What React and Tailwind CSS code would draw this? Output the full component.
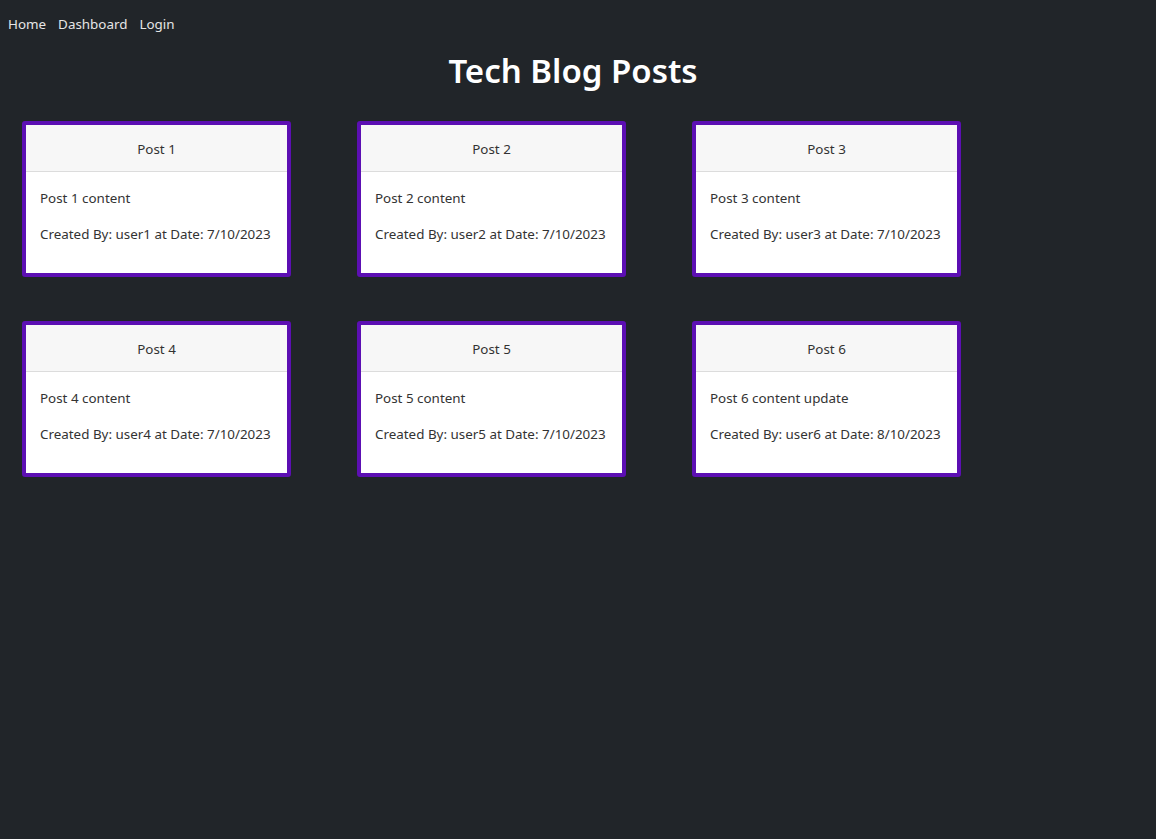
import React from 'react';

const posts = [
  { id: 1, content: 'Post 1 content', user: 'user1', date: '7/10/2023' },
  { id: 2, content: 'Post 2 content', user: 'user2', date: '7/10/2023' },
  { id: 3, content: 'Post 3 content', user: 'user3', date: '7/10/2023' },
  { id: 4, content: 'Post 4 content', user: 'user4', date: '7/10/2023' },
  { id: 5, content: 'Post 5 content', user: 'user5', date: '7/10/2023' },
  { id: 6, content: 'Post 6 content update', user: 'user6', date: '8/10/2023' },
];

function PostCard({ post }) {
  return (
    <div className="w-[269px] h-[156px] rounded-[3px] border-4 border-[#5c0fb3] bg-white flex flex-col">
      <div className="h-[47px] pt-[2px] flex items-center justify-center bg-[#f7f7f7] border-b border-[#dcdcdc] text-[13.4px] text-[#333]">
        Post {post.id}
      </div>
      <div className="px-[14px] pt-[16px] text-[13.4px] text-[#333] whitespace-nowrap">
        <p className="leading-[20px]">{post.content}</p>
        <p className="leading-[20px] mt-[16px]">
          Created By: {post.user} at Date: {post.date}
        </p>
      </div>
    </div>
  );
}

export default function App() {
  return (
    <div
      className="min-h-[839px] bg-[#212529] text-white"
      style={{ fontFamily: '"Noto Sans", "Open Sans", sans-serif' }}
    >
      <nav className="flex gap-[12px] pl-[8px] pt-[14px] text-[13.4px] text-[#e6e6e6] leading-[20px]">
        <a href="#">Home</a>
        <a href="#">Dashboard</a>
        <a href="#">Login</a>
      </nav>
      <h1 className="text-center pr-[10px] mt-[15px] text-[33px] font-semibold leading-[44px]">
        Tech Blog Posts
      </h1>
      <div className="grid grid-cols-[269px_269px_269px] gap-x-[66px] gap-y-[44px] pl-[22px] mt-[28px]">
        {posts.map((p) => (
          <PostCard key={p.id} post={p} />
        ))}
      </div>
    </div>
  );
}
